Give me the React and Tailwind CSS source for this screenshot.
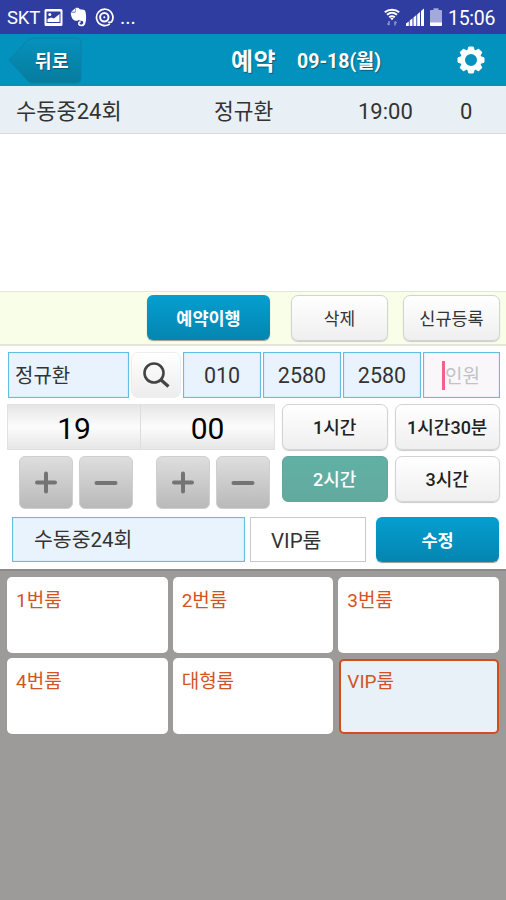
import React, { useState } from 'react';

const ROOMS = ['1번룸', '2번룸', '3번룸', '4번룸', '대형룸', 'VIP룸'];
const DURATIONS = ['1시간', '1시간30분', '2시간', '3시간'];

const ImageIcon = () => (
  <svg className="w-[19px] h-[17px]" viewBox="0 0 19 17" fill="white">
    <path fillRule="evenodd" d="M2 0h15a1.500 1.500 0 0 1 1.500 1.500v14a1.500 1.500 0 0 1-1.500 1.500h-15a1.500 1.500 0 0 1-1.500-1.500v-14a1.500 1.500 0 0 1 1.500-1.500zM2.500 2.500v11.500h14v-11.500z" />
    <path d="M3.500 13V10l3.500-1.500 3 1 5.500-4.500v8z" />
    <circle cx="5.800" cy="5.500" r="1.500" />
  </svg>
);

const ElephantIcon = () => (
  <svg className="w-[18px] h-[20px]" viewBox="0 0 18 20" fill="white">
    <path d="M5 1.500v3.300H1.200z" />
    <path d="M5.500 1c1.700-.4 3.500 .1 4.200 1.200l3.600.6c1.500.2 2.100 1.100 2.400 3 .8 4.500.3 9.500-.8 11.700-.7 1.300-2 1.800-3.600 1.800-2.200 0-3.300-1-3.300-2.700 0-1.500.9-2.500 2.600-2.500v1.700c-.7 0-1.100.3-1.100.8 0 .6.5 1 1.500 1 1.500 0 2.300-.9 2.300-2.300 0-1.200-1.700-1.500-3.200-1.500-.5 0-.9-.5-1.100-1.300-.5 1-1.600 1.500-3.200 1.200C2.300 13.300 1 9.700.8 5.500h4.700z" />
  </svg>
);

const AtIcon = () => (
  <svg className="w-[19px] h-[19px]" viewBox="0 0 19 19" fill="none" stroke="white">
    <path strokeWidth="1.700" d="M14.800 15.800a8.200 8.200 0 1 1 2-2.300c-.9 1.200-2.800 1.200-3.500.1" />
    <circle cx="9.300" cy="9.300" r="4.200" strokeWidth="2" />
    <circle cx="9.300" cy="9.300" r="1" fill="white" stroke="none" />
  </svg>
);

const WifiIcon = () => (
  <svg className="w-[16px] h-[18px]" viewBox="0 0 16 18" fill="none" stroke="white">
    <path strokeWidth="2" d="M.8 4.200c4-3.400 10.400-3.400 14.400 0M3 6.800c3-2.400 7-2.400 10 0M5.200 9.200c1.800-1.300 3.800-1.300 5.600 0" />
    <path d="M6.300 10h3.400L8 12.500z" fill="white" stroke="none" />
    <path d="M5 13v4M3.500 15.500l1.500 1.500M11 17.500v-4M12.500 15l-1.500-1.500" stroke="#8f97d0" strokeWidth="1.500" />
  </svg>
);

const SignalIcon = () => (
  <svg className="w-[18px] h-[18px]" viewBox="0 0 18 18" fill="white">
    <path d="M0 18v-2.500l2.800-2V18zM3.700 18v-5.500l2.800-2.200V18zM7.500 18V9.500l2.800-2.500v11zM11.200 18V6.500L14 4v14zM15 18V3l3-2.500V18z" />
  </svg>
);

const BatteryIcon = () => (
  <svg className="w-[12px] h-[18px]" viewBox="0 0 12 18">
    <path fill="#a3a9d8" d="M1 2h2.500V.3h5V2H11q1 0 1 1v14q0 1-1 1H1q-1 0-1-1V3q0-1 1-1z" />
    <path fill="white" d="M0 14.500h12V17q0 1-1 1H1q-1 0-1-1z" />
  </svg>
);

const GearIcon = () => (
  <svg className="w-[28px] h-[28px]" viewBox="-14 -14 28 28">
    <g fill="white" stroke="white" strokeWidth="1" strokeLinejoin="round">
      {[0, 45, 90, 135, 180, 225, 270, 315].map(a => (
        <path key={a} transform={`rotate(${a})`} d="M-3.500 -9l1.300-4h4.400L3.500-9z" />
      ))}
    </g>
    <circle r="8.200" fill="none" stroke="white" strokeWidth="4.400" />
  </svg>
);

const BackButton = () => (
  <button type="button" className="relative w-[74px] h-[47px] flex items-center justify-end pt-[3px] pr-[13px] text-white text-[18px] font-bold">
    <svg className="absolute inset-0 w-full h-full" viewBox="0 0 74 47">
      <defs>
        <linearGradient id="back" x1="0" y1="0" x2="0" y2="1">
          <stop offset="0" stopColor="#0592bd" />
          <stop offset="1" stopColor="#077b9e" />
        </linearGradient>
      </defs>
      <path d="M1 23L19 4Q22 1 26 1H69Q73 1 73 5V42Q73 46 69 46H25Q22 46 20 44Z" fill="url(#back)" stroke="#0883a8" strokeWidth="1" />
    </svg>
    <span className="relative tracking-[0.5px] [text-shadow:1px_1px_1px_#075c78]">뒤로</span>
  </button>
);

const StepButton = ({ minus }) => (
  <button type="button" className="w-[54px] h-[53px] rounded-[6px] border border-[#cfcfcf] bg-linear-to-b from-[#dedede] to-[#b9b9b9] flex items-center justify-center">
    <svg className="w-6 h-6" viewBox="0 0 24 24" stroke="#747474" strokeWidth="4" strokeLinecap="round">
      <path d={minus ? 'M2.500 12h19' : 'M3 11.500h18M12 2.500v18'} />
    </svg>
  </button>
);

const Field = ({ className, children }) => (
  <div className={`border border-[#62bfe2] bg-[#e9f3fe] shadow-[inset_0_0_1px_#62bfe2] flex items-center pt-[2px] text-[#333] ${className}`}>
    {children}
  </div>
);

const lightButton = 'rounded-[7px] border border-[#d3d3d3] bg-linear-to-b from-white to-[#f0eff0] shadow-[0_1px_1px_#ccc] flex items-center justify-center whitespace-nowrap';
const blueButton = 'rounded-[6px] bg-linear-to-b from-[#049fd0] to-[#0585b0] shadow-[0_1px_1px_#999] text-white font-bold flex items-center justify-center';

export default function App() {
  const [duration, setDuration] = useState('2시간');
  const [room, setRoom] = useState('VIP룸');

  return (
    <div className="w-[506px] h-[900px] overflow-hidden flex flex-col bg-white font-[Roboto,'Noto_Sans_CJK_KR',sans-serif] leading-none">
      {/* Status bar */}
      <div className="h-[34px] shrink-0 bg-[#303da0] text-white flex items-center justify-between pl-[7px] pr-[11px]">
        <div className="flex items-center">
          <span className="w-[37px] pt-[2px] text-[18.5px] tracking-[-0.2px]">SKT</span>
          <ImageIcon />
          <span className="ml-[7px]"><ElephantIcon /></span>
          <span className="ml-[7px]"><AtIcon /></span>
          <span className="ml-[6px] text-[20px]">...</span>
        </div>
        <div className="flex items-center">
          <WifiIcon />
          <span className="ml-[6px]"><SignalIcon /></span>
          <span className="ml-[6px]"><BatteryIcon /></span>
          <span className="ml-[6px] w-[47px] pt-[3px] text-[19.5px] tracking-[-0.3px]">15:06</span>
        </div>
      </div>

      {/* Header */}
      <div className="h-[52px] shrink-0 bg-[#0391be] text-white font-bold flex items-center pl-2">
        <BackButton />
        <h1 className="ml-[149px] w-[66px] pt-[3px] text-[24px] tracking-[0.3px] [text-shadow:1px_1px_1px_#05607e]">예약</h1>
        <span className="w-[160px] pt-[4px] text-[19.5px] [text-shadow:1px_1px_1px_#05607e]">09-18(월)</span>
        <button type="button"><GearIcon /></button>
      </div>

      {/* Reservation list */}
      <div className="h-[48px] shrink-0 bg-[#e8f0f6] border-b border-[#d7dadd] flex items-center pt-[4px] pl-4 text-[#333]">
        <span className="w-[198px] text-[22px]">수동중24회</span>
        <span className="w-[144px] text-[21.5px]">정규환</span>
        <span className="w-[102px] text-[22px]">19:00</span>
        <span className="text-[22px]">0</span>
      </div>
      <div className="h-[157px] shrink-0" />

      <div className="h-[55px] shrink-0 bg-[#f8fee7] border-t border-b-2 border-[#e3e6d9] flex items-start pt-[3px] pl-[147px]">
        <button type="button" className={`w-[123px] h-[45px] pt-[4px] text-[17.5px] ${blueButton}`}>예약이행</button>
        <button type="button" className={`ml-[21px] w-[97px] h-[46px] pt-[2px] text-[17px] text-[#333] ${lightButton}`}>삭제</button>
        <button type="button" className={`ml-[15px] w-[97px] h-[46px] pt-[3px] text-[17.5px] text-[#333] ${lightButton}`}>신규등록</button>
      </div>

      {/* Guest info */}
      <div className="mt-[6px] pl-2 flex shrink-0">
        <Field className="w-[121px] h-[46px] pl-[6px] text-[20px]">정규환</Field>
        <button type="button" className="ml-[2px] mr-[2px] w-[50px] h-[46px] rounded-[7px] border border-[#eee] bg-linear-to-b from-white to-[#ededed] flex items-center justify-center">
          <svg className="w-7 h-7" viewBox="0 0 28 28" fill="none" stroke="#444" strokeWidth="2.600">
            <circle cx="12" cy="12" r="9.500" />
            <path d="M18.500 18.500l8 7" strokeWidth="3.200" />
          </svg>
        </button>
        <Field className="w-[78px] h-[46px] justify-center text-[21.5px]">010</Field>
        <Field className="ml-[2px] w-[78px] h-[46px] justify-center text-[21.5px]">2580</Field>
        <Field className="ml-[2px] w-[78px] h-[46px] justify-center text-[21.5px]">2580</Field>
        <div className="ml-[2px] w-[77px] h-[46px] border border-[#62bfe2] bg-[#f9f7f9] shadow-[inset_0_0_1px_#62bfe2] flex items-center pl-[18px] text-[19px] text-[#c2c2c4]">
          <span className="w-[3px] h-[29px] bg-[#f2608c]" />
          <span className="pt-[2px]">인원</span>
        </div>
      </div>

      {/* Time and duration */}
      <div className="mt-[6px] pl-[7px] flex shrink-0">
        <div className="w-[268px]">
          <div className="h-[46px] border border-[#e2e2e2] bg-linear-to-b from-[#e6e6e6] via-[#fcfcfc] to-[#e6e6e6] grid grid-cols-2 text-[30px] text-black">
            <span className="flex items-center justify-center pt-[3px] border-r border-[#ddd]">19</span>
            <span className="flex items-center justify-center pt-[3px]">00</span>
          </div>
          <div className="mt-[6px] pl-3 flex">
            <StepButton />
            <span className="ml-[6px]"><StepButton minus /></span>
            <span className="ml-[23px]"><StepButton /></span>
            <span className="ml-[6px]"><StepButton minus /></span>
          </div>
        </div>
        <div className="ml-[7px] w-[218px] grid grid-cols-2 gap-x-[7px] gap-y-[6px] content-start">
          {DURATIONS.map(item => (
            <button
              key={item}
              type="button"
              onClick={() => setDuration(item)}
              className={item === duration
                ? 'h-[46px] pt-[2px] rounded-[6px] border border-[#63a49b] bg-linear-to-b from-[#60b1a5] to-[#63a99e] text-white text-[18px] font-medium flex items-center justify-center'
                : `h-[46px] pt-[2px] text-[18px] font-medium text-[#222] ${lightButton}`}
            >
              {item}
            </button>
          ))}
        </div>
      </div>

      <div className="mt-[8px] pl-3 flex shrink-0">
        <Field className="w-[233px] h-[45px] pl-[21px] text-[20.5px]">수동중24회</Field>
        <div className="ml-[5px] w-[116px] h-[45px] border border-[#c8c8c8] flex items-center pt-[3px] pl-5 text-[20.5px] text-[#333]">VIP룸</div>
        <button type="button" className={`ml-[10px] w-[123px] h-[45px] pt-[4px] text-[17.5px] ${blueButton}`}>수정</button>
      </div>

      {/* Rooms */}
      <div className="mt-[7px] flex-1 bg-[#9c9b99] border-t-2 border-[#8d8c89] pt-[6px] px-[7px]">
        <div className="grid grid-cols-3 gap-x-[5px] gap-y-[5px]">
          {ROOMS.map(name => (
            <button
              key={name}
              type="button"
              onClick={() => setRoom(name)}
              className={`rounded-[5px] text-left text-[19px] text-[#d25425] flex items-start ${
                name === room ? 'mt-px ml-px h-[75px] bg-[#e8f1f8] border-2 border-[#d34d19] pt-[11px] pl-[6px]' : 'h-[76px] bg-white pt-[14px] pl-[9px]'
              }`}
            >
              {name}
            </button>
          ))}
        </div>
      </div>
    </div>
  );
}
